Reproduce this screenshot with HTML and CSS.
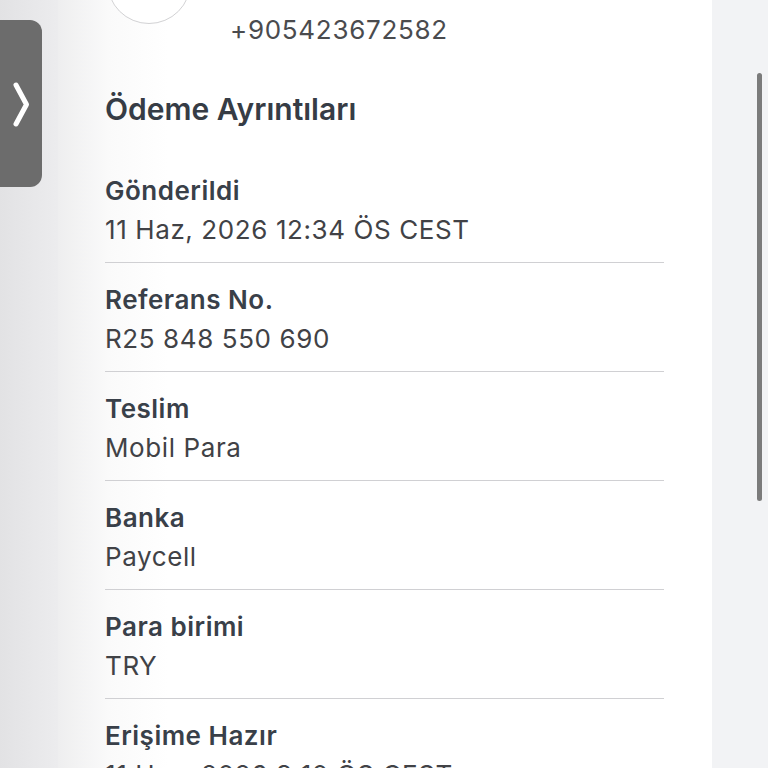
FILE: index.html
```html
<!DOCTYPE html>
<html lang="tr">
<head>
  <meta charset="UTF-8" />
  <meta name="viewport" content="width=device-width, initial-scale=1" />
  <title>Ödeme Ayrıntıları</title>
  <link rel="stylesheet" href="styles.css">
</head>
<body>

<div class="screen">
  <aside class="side-left">
    <button class="side-tab" aria-label="Aç">
      <svg width="42" height="167" viewBox="0 0 42 167">
        <path d="M16 65 L26.5 84.5 L16 104" fill="none" stroke="#fff" stroke-width="5" stroke-linecap="round" stroke-linejoin="round"/>
      </svg>
    </button>
  </aside>

  <main class="card">
    <div class="contact">
      <div class="avatar"></div>
      <div class="phone">+905423672582</div>
    </div>

    <h2 class="section-title">Ödeme Ayrıntıları</h2>

    <ul class="details">
      <li>
        <span class="label">Gönderildi</span>
        <span class="value">11 Haz, 2026 12:34 ÖS CEST</span>
      </li>
      <li>
        <span class="label">Referans No.</span>
        <span class="value">R25 848 550 690</span>
      </li>
      <li>
        <span class="label">Teslim</span>
        <span class="value">Mobil Para</span>
      </li>
      <li>
        <span class="label">Banka</span>
        <span class="value">Paycell</span>
      </li>
      <li>
        <span class="label">Para birimi</span>
        <span class="value">TRY</span>
      </li>
      <li>
        <span class="label">Erişime Hazır</span>
        <span class="value">11 Haz, 2026 3:10 ÖS CEST</span>
      </li>
    </ul>
  </main>

  <aside class="side-right">
    <div class="scrollbar"></div>
  </aside>
</div>

</body>
</html>
```

FILE: styles.css
```css
html, body {
  margin: 0;
  height: 100%;
  overflow: hidden;
}
body {
  font-family: Inter, "Open Sans", sans-serif;
  background-color: #f2f2f4;
  color: #393f48;
}
.screen {
  display: flex;
  height: 768px;
}
.side-left {
  position: relative;
  width: 58px;
  flex-shrink: 0;
  background: linear-gradient(to right, #e2e2e4, #ececee);
}
.side-tab {
  position: absolute;
  left: 0;
  top: 20px;
  width: 42px;
  height: 167px;
  padding: 0;
  border: none;
  background-color: #6c6c6c;
  border-radius: 0 12px 12px 0;
}
.side-tab svg {
  display: block;
}
.card {
  width: 654px;
  flex-shrink: 0;
  padding: 0 48px 0 47px;
  box-sizing: border-box;
  background: linear-gradient(to right, #eeeeef 0, #fafafa 50px, #fff 110px);
}
.side-right {
  position: relative;
  flex: 1;
  background-color: #f2f3f5;
}
.scrollbar {
  position: absolute;
  left: 45px;
  top: 73px;
  width: 5px;
  height: 428px;
  border-radius: 3px;
  background-color: #7b7b7b;
}
/* kişi bilgisi */
.contact {
  display: flex;
  align-items: flex-start;
  gap: 39px;
}
.avatar {
  width: 84px;
  height: 84px;
  margin: -60px 0 0 2px;
  border: 1.5px solid #d2d2d4;
  border-radius: 50%;
  box-sizing: border-box;
  background-color: #fff;
}
.phone {
  margin-top: 15px;
  font-size: 26px;
  line-height: 30px;
  letter-spacing: 0.7px;
  color: #4a4b4e;
}
.section-title {
  margin: 46px 0 27px;
  font-size: 30px;
  line-height: 36px;
  font-weight: 600;
  color: #363c45;
}
/* ödeme satırları */
.details {
  list-style: none;
  margin: 0;
  padding: 0;
}
.details li {
  display: flex;
  flex-direction: column;
  padding: 21px 0 9px;
  border-bottom: 1.5px solid #d0d0d3;
}
.label {
  font-size: 26px;
  line-height: 32px;
  font-weight: 600;
  letter-spacing: 0.5px;
  color: #394049;
}
.value {
  font-size: 26px;
  line-height: 46px;
  letter-spacing: 0.6px;
  color: #414246;
  white-space: nowrap;
}
```
